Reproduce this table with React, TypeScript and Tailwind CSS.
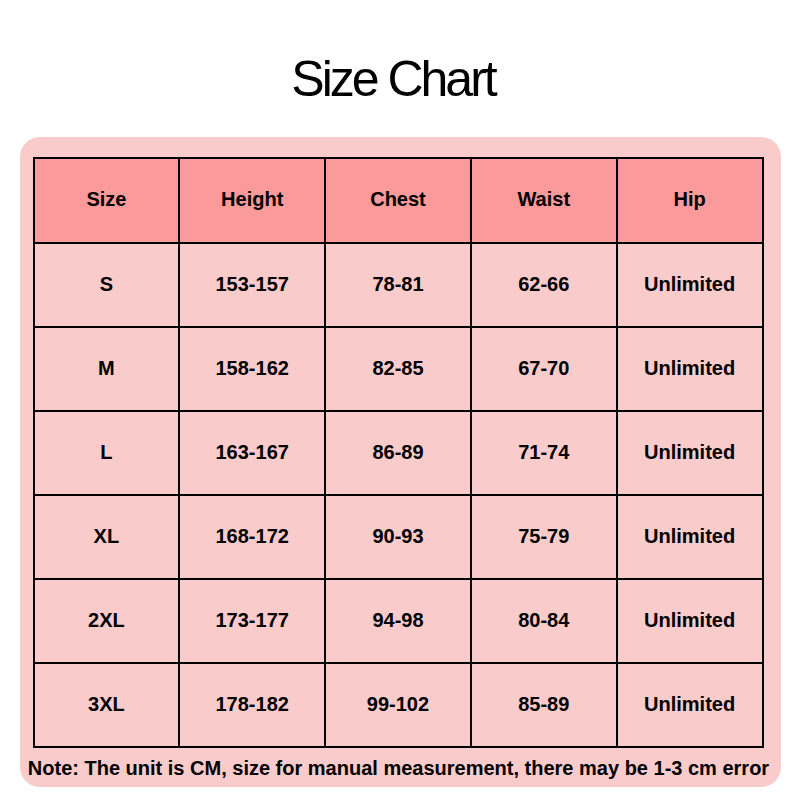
const HEADERS = ['Size', 'Height', 'Chest', 'Waist', 'Hip'];

const ROWS = [
  ['S', '153-157', '78-81', '62-66', 'Unlimited'],
  ['M', '158-162', '82-85', '67-70', 'Unlimited'],
  ['L', '163-167', '86-89', '71-74', 'Unlimited'],
  ['XL', '168-172', '90-93', '75-79', 'Unlimited'],
  ['2XL', '173-177', '94-98', '80-84', 'Unlimited'],
  ['3XL', '178-182', '99-102', '85-89', 'Unlimited'],
];

export default function App() {
  return (
    <div
      className="w-[800px] h-[800px] bg-white flex flex-col items-center"
      style={{ fontFamily: '"Liberation Sans", Arial, sans-serif' }}
    >
      <h1 className="mt-[51px] mr-[14px] h-[56px] text-[50px] leading-[56px] text-black tracking-[-3px]">
        Size Chart
      </h1>

      <div className="mt-[30px] w-[761px] rounded-[20px] bg-[#f9cbcb] pl-[13px] pr-[16px] pt-[20px] pb-[7px]">
        <table className="w-[731px] border-collapse table-fixed">
          <thead>
            <tr className="h-[85px] bg-[#fa9a9a]">
              {HEADERS.map((h) => (
                <th
                  key={h}
                  className="border-2 border-black pb-[3px] text-[20px] font-bold text-black text-center"
                >
                  {h}
                </th>
              ))}
            </tr>
          </thead>
          <tbody>
            {ROWS.map((row) => (
              <tr key={row[0]} className="h-[84px]">
                {row.map((cell, i) => (
                  <td
                    key={i}
                    className="border-2 border-black pb-[3px] text-[20px] font-bold text-black text-center"
                  >
                    {cell}
                  </td>
                ))}
              </tr>
            ))}
          </tbody>
        </table>

        <p className="mt-[8px] text-[20px] leading-[24px] font-bold text-black text-center whitespace-nowrap -mx-[12px]">
          Note: The unit is CM, size for manual measurement, there may be 1-3 cm error
        </p>
      </div>
    </div>
  );
}
